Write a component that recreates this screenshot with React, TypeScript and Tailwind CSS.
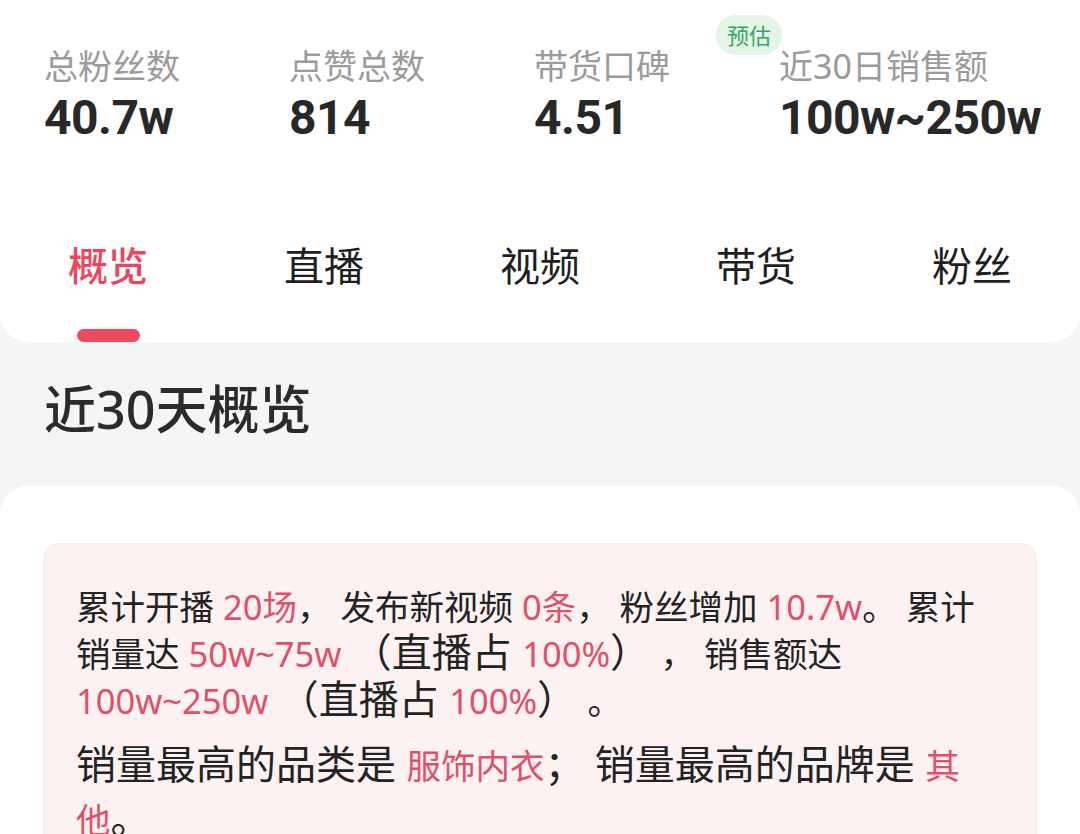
import React from "react";

const cjk = { fontFamily: '"Noto Sans", "Noto Sans CJK SC", sans-serif' };
const num = { fontFamily: 'Roboto, "Noto Sans", sans-serif' };

function Stat({ label, value, badge }: { label: string; value: string; badge?: boolean }) {
  return (
    <div className="relative w-[245px] shrink-0">
      {badge && (
        <div className="absolute left-[-63px] top-[-31px] flex h-[40px] w-[66px] items-center justify-center rounded-full bg-[#e2f5e8] text-[22px] leading-none text-[#37a463]">
          预估
        </div>
      )}
      <div className="text-[34px] leading-[40px] text-[#9b9b9b] whitespace-nowrap">{label}</div>
      <div
        className="mt-[4px] text-[48px] font-bold leading-[56px] tracking-[-0.5px] text-[#282828] whitespace-nowrap"
        style={num}
      >
        {value}
      </div>
    </div>
  );
}

const R = ({ children }: { children: React.ReactNode }) => (
  <span className="text-[34.5px] text-[#e0506b]">{children}</span>
);
const B = ({ children }: { children: React.ReactNode }) => <span className="text-[40px]">{children}</span>;

export default function App() {
  const tabs = ["概览", "直播", "视频", "带货", "粉丝"];
  return (
    <div className="h-[834px] w-[1080px] overflow-hidden bg-[#f4f5f7]" style={cjk}>
      <div className="rounded-b-[28px] bg-white pt-[46px]">
        <div className="flex pl-[44px]">
          <Stat label="总粉丝数" value="40.7w" />
          <Stat label="点赞总数" value="814" />
          <Stat label="带货口碑" value="4.51" />
          <Stat label="近30日销售额" value="100w~250w" badge />
        </div>
        <div className="mt-[80px] flex">
          {tabs.map((t, i) => (
            <div key={t} className="flex flex-1 flex-col items-center">
              <div
                className={
                  "h-[80px] text-[40px] leading-[80px] " +
                  (i === 0 ? "font-medium text-[#e8485f]" : "text-[#1f1f1f]")
                }
              >
                {t}
              </div>
              <div
                className={
                  "mt-[23px] h-[13px] w-[63px] rounded-full " + (i === 0 ? "bg-[#ee4a5e]" : "bg-transparent")
                }
              />
            </div>
          ))}
        </div>
      </div>

      <div className="px-[44px] pb-[47px] pt-[37px]">
        <div className="text-[52px] font-medium leading-[60px] text-[#2b2b2b]">近30天概览</div>
      </div>

      <div className="rounded-t-[28px] bg-white px-[43px] pt-[57px]">
        <div className="rounded-[16px] border border-[#fbe8e8] bg-[#fdf2f2] pb-[40px] pl-[32px] pr-[24px] pt-[40px] text-[#232323]">
          <p className="text-[34.5px] leading-[45px]">
            累计开播 <R>20场</R>， 发布新视频 <R>0条</R>， 粉丝增加 <R>10.7w</R>。 累计
            <br />
            销量达 <R>50w~75w</R>
            <B> （直播占 </B>
            <R>100%</R>
            <B>） </B>， 销售额达
            <br />
            <R>100w~250w</R>
            <B> （直播占 </B>
            <R>100%</R>
            <B>） </B>。
          </p>
          <p className="mt-[15px] text-[40px] leading-[52px]">
            销量最高的品类是 <R>服饰内衣</R>； 销量最高的品牌是 <R>其</R>
            <br />
            <R>他</R>。
          </p>
        </div>
      </div>
    </div>
  );
}
